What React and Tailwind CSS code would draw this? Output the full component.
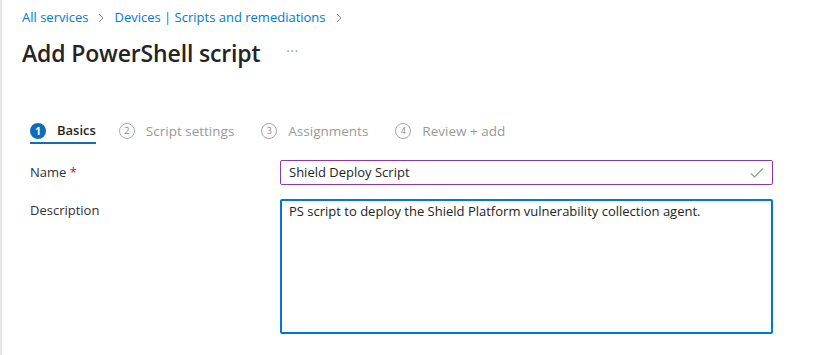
const steps = [
  { n: 1, label: "Basics", active: true },
  { n: 2, label: "Script settings" },
  { n: 3, label: "Assignments" },
  { n: 4, label: "Review + add" },
];

const Chevron = () => (
  <svg width="8" height="10" viewBox="0 0 8 10" className="mx-[9px]">
    <path d="M2 1l4 4-4 4" fill="none" stroke="#8a8886" strokeWidth="1" />
  </svg>
);

export default function App() {
  return (
    <div
      className="w-[823px] h-[355px] bg-white flex overflow-hidden"
      style={{ fontFamily: '"Open Sans", "Noto Sans", sans-serif' }}
    >
      {/* left edge of blade */}
      <div className="w-[2px] bg-[#e6e6e6] shrink-0" />

      <div className="flex-1 pl-[20px]">
        {/* Breadcrumb */}
        <div className="flex items-center h-[20px] mt-[8px] text-[13px] text-[#0078d4]">
          <span>All services</span>
          <Chevron />
          <span>Devices | Scripts and remediations</span>
          <Chevron />
        </div>

        {/* Title */}
        <div className="flex items-center mt-[10px] h-[30px]">
          <h1 className="text-[23px] font-semibold text-[#242424] tracking-[-0.15px]">
            Add PowerShell script
          </h1>
          <span className="ml-[26px] text-[12px] text-[#8a8886] tracking-[1px] -mt-[2px]">···</span>
        </div>

        {/* Stepper */}
        <div className="flex items-start mt-[52px] pl-[8px] gap-[27px]">
          {steps.map((s) => (
            <div key={s.n} className={s.active ? "flex flex-col mr-[-4px]" : "flex flex-col"}>
              <div className="flex items-center h-[22px]">
                {s.active ? (
                  <span className="w-[16px] h-[16px] rounded-full bg-[#0f6cbd] text-white text-[10px] font-bold flex items-center justify-center">
                    {s.n}
                  </span>
                ) : (
                  <span className="w-[16px] h-[16px] rounded-full border border-[#a8a8a8] text-[#8a8886] text-[9px] flex items-center justify-center">
                    {s.n}
                  </span>
                )}
                <span
                  className={
                    s.active
                      ? "ml-[11px] text-[13px] font-semibold text-[#242424]"
                      : "ml-[11px] text-[13.5px] text-[#9a9a9a]"
                  }
                >
                  {s.label}
                </span>
              </div>
              <div className={s.active ? "h-[2px] bg-[#0f6cbd]" : "h-[2px]"} />
            </div>
          ))}
        </div>

        {/* Form */}
        <div className="mt-[16px] pl-[8px] pr-[50px]">
          <div className="flex items-center">
            <label className="w-[250px] text-[13px] text-[#323130]">
              Name <span className="text-[#a4262c]">*</span>
            </label>
            <div className="flex-1 h-[25px] border border-[#8a3aad] rounded-[2px] flex items-center px-[8px]">
              <span className="flex-1 text-[13px] text-[#242424]">Shield Deploy Script</span>
              <svg width="14" height="12" viewBox="0 0 14 12">
                <path d="M1 6.5l3.5 3.5L13 1.5" fill="none" stroke="#6bb26a" strokeWidth="1.2" />
              </svg>
            </div>
          </div>

          <div className="flex items-start mt-[14px]">
            <label className="w-[250px] text-[13px] text-[#323130] pt-[2px]">Description</label>
            <div className="flex-1 h-[135px] border-2 border-[#0078d4] rounded-[2px] px-[7px] text-[13px] leading-[20px] text-[#242424]">
              PS script to deploy the Shield Platform vulnerability collection agent.
            </div>
          </div>
        </div>
      </div>
    </div>
  );
}
